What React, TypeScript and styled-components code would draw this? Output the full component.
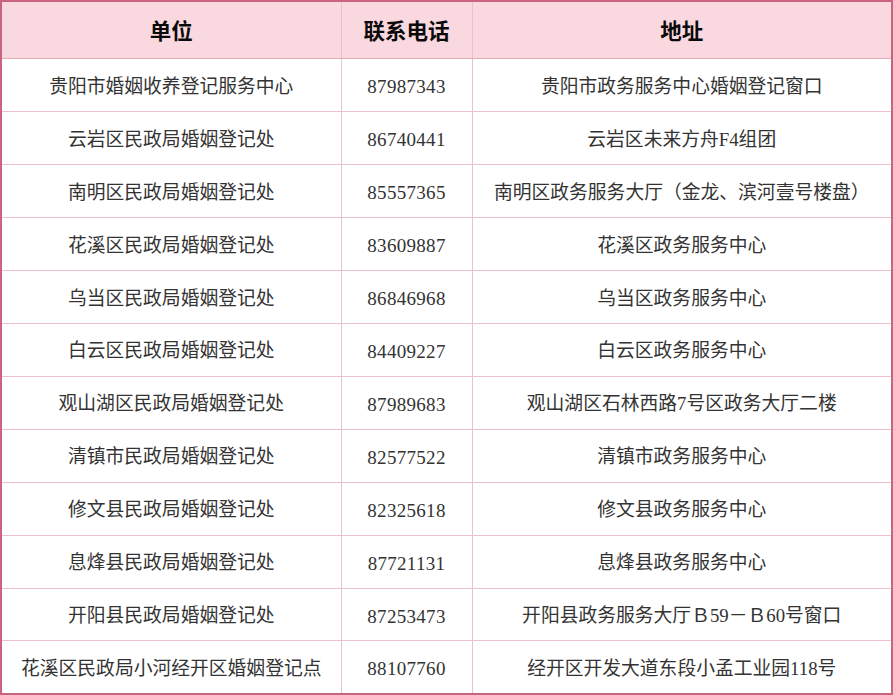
import styled, { createGlobalStyle } from "styled-components";

const GlobalStyle = createGlobalStyle`
  html, body {
    margin: 0;
    padding: 0;
    background: #ffffff;
  }
`;

const Table = styled.table`
  width: 893px;
  height: 695px;
  border-collapse: collapse;
  table-layout: fixed;
  border: 2px solid #c9637f;
  font-family: "Liberation Serif", "Noto Sans CJK SC", serif;
  color: #222;
`;

const HeadCell = styled.th`
  height: 56px;
  background: #f9d8df;
  border: 1px solid #ecc1cb;
  border-bottom-color: #e3aab8;
  font-family: "Noto Sans CJK SC", sans-serif;
  font-weight: 700;
  font-size: 21.5px;
  line-height: 1.2;
  color: #0a0a0a;
  text-align: center;
  padding: 0;
`;

const Cell = styled.td<{ $num?: boolean }>`
  box-sizing: border-box;
  height: 51px;
  border: 1px solid #ecc1cb;
  font-size: ${(p) => (p.$num ? "19px" : "18.8px")};
  letter-spacing: ${(p) => (p.$num ? "0.3px" : "0")};
  line-height: 1.2;
  text-align: center;
  padding: ${(p) => (p.$num ? "5px 0 0" : "4px 0 0")};
  white-space: nowrap;
  color: #333;
`;

const rows: [string, string, string][] = [
  ["贵阳市婚姻收养登记服务中心", "87987343", "贵阳市政务服务中心婚姻登记窗口"],
  ["云岩区民政局婚姻登记处", "86740441", "云岩区未来方舟F4组团"],
  ["南明区民政局婚姻登记处", "85557365", "南明区政务服务大厅（金龙、滨河壹号楼盘）"],
  ["花溪区民政局婚姻登记处", "83609887", "花溪区政务服务中心"],
  ["乌当区民政局婚姻登记处", "86846968", "乌当区政务服务中心"],
  ["白云区民政局婚姻登记处", "84409227", "白云区政务服务中心"],
  ["观山湖区民政局婚姻登记处", "87989683", "观山湖区石林西路7号区政务大厅二楼"],
  ["清镇市民政局婚姻登记处", "82577522", "清镇市政务服务中心"],
  ["修文县民政局婚姻登记处", "82325618", "修文县政务服务中心"],
  ["息烽县民政局婚姻登记处", "87721131", "息烽县政务服务中心"],
  ["开阳县民政局婚姻登记处", "87253473", "开阳县政务服务大厅Ｂ59－Ｂ60号窗口"],
  ["花溪区民政局小河经开区婚姻登记点", "88107760", "经开区开发大道东段小孟工业园118号"],
];

export default function App() {
  return (
    <>
      <GlobalStyle />
      <Table>
        <colgroup>
          <col style={{ width: 340 }} />
          <col style={{ width: 131 }} />
          <col />
        </colgroup>
        <thead>
          <tr>
            <HeadCell>单位</HeadCell>
            <HeadCell>联系电话</HeadCell>
            <HeadCell>地址</HeadCell>
          </tr>
        </thead>
        <tbody>
          {rows.map(([unit, phone, addr]) => (
            <tr key={phone}>
              <Cell>{unit}</Cell>
              <Cell $num>{phone}</Cell>
              <Cell>{addr}</Cell>
            </tr>
          ))}
        </tbody>
      </Table>
    </>
  );
}
